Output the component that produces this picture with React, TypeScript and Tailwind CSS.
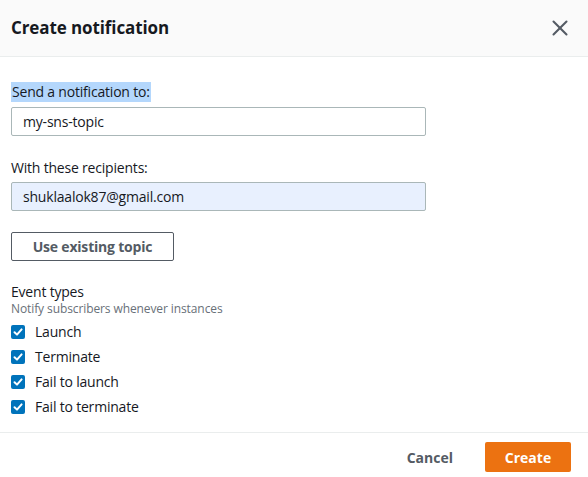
import { X } from 'lucide-react';

const events = ['Launch', 'Terminate', 'Fail to launch', 'Fail to terminate'];

const CheckBox = () => (
  <span className="flex h-[14px] w-[14px] items-center justify-center rounded-[2px] bg-[#0073bb]">
    <svg viewBox="0 0 14 14" className="h-[14px] w-[14px]">
      <path d="M3.5 7.2 L6 9.6 L10.6 4.4" fill="none" stroke="#fff" strokeWidth="2" strokeLinecap="round" strokeLinejoin="round" />
    </svg>
  </span>
);

const App = () => {
  return (
    <div
      className="flex h-[477px] w-[588px] flex-col bg-white text-[#16191f]"
      style={{ fontFamily: '"Open Sans", "Noto Sans", sans-serif' }}
    >
      {/* Header */}
      <div className="flex h-[57px] shrink-0 items-center justify-between border-b border-[#eaeded] bg-[#fafafa] pl-[11px] pr-[15px]">
        <h2 className="text-[17px] font-bold tracking-[-0.1px] text-[#16191f]">Create notification</h2>
        <X className="h-[26px] w-[26px] text-[#545b64]" strokeWidth={1.9} />
      </div>

      {/* Body */}
      <div className="flex flex-1 flex-col px-[11px] pt-[25px]">
        <div className="flex h-[20px] items-center">
          <span className="bg-[#b4d7fc] px-[1px] text-[14px] leading-[20px] tracking-[-0.2px]">Send a notification to:</span>
        </div>
        <div className="mt-[5px] flex h-[29px] w-[415px] items-center rounded-[2px] border border-[#aab7b8] bg-white px-[11px] text-[14px] tracking-[-0.2px]">
          my-sns-topic
        </div>

        <div className="mt-[21px] flex h-[20px] items-center text-[14px] tracking-[-0.2px]">With these recipients:</div>
        <div className="mt-[5px] flex h-[29px] w-[415px] items-center rounded-[2px] border border-[#aab7b8] bg-[#e8f0fe] px-[11px] text-[14px] tracking-[-0.2px]">
          shuklaalok87@gmail.com
        </div>

        <div className="mt-[21px]">
          <button className="flex h-[29px] w-[163px] items-center justify-center rounded-[2px] border border-[#545b64] bg-white text-[14px] font-bold tracking-[-0.2px] text-[#545b64]">
            Use existing topic
          </button>
        </div>

        <div className="mt-[20px] flex h-[20px] items-center text-[14px] tracking-[-0.2px]">Event types</div>
        <div className="flex h-[16px] items-center text-[12px] tracking-[-0.1px] text-[#687078]">Notify subscribers whenever instances</div>
        <div className="mt-[2px] flex flex-col">
          {events.map((e) => (
            <div key={e} className="flex h-[25px] items-center gap-[10px]">
              <CheckBox />
              <span className="text-[14px] tracking-[-0.2px]">{e}</span>
            </div>
          ))}
        </div>
      </div>

      {/* Footer */}
      <div className="flex h-[45px] shrink-0 items-center justify-end gap-[32px] border-t border-[#eaeded] pr-[17px] pt-[4px]">
        <span className="text-[14px] font-bold text-[#545b64]">Cancel</span>
        <button className="flex h-[30px] w-[86px] items-center justify-center rounded-[2px] bg-[#ec7211] text-[14px] font-bold text-white">
          Create
        </button>
      </div>
    </div>
  );
};

export default App;
